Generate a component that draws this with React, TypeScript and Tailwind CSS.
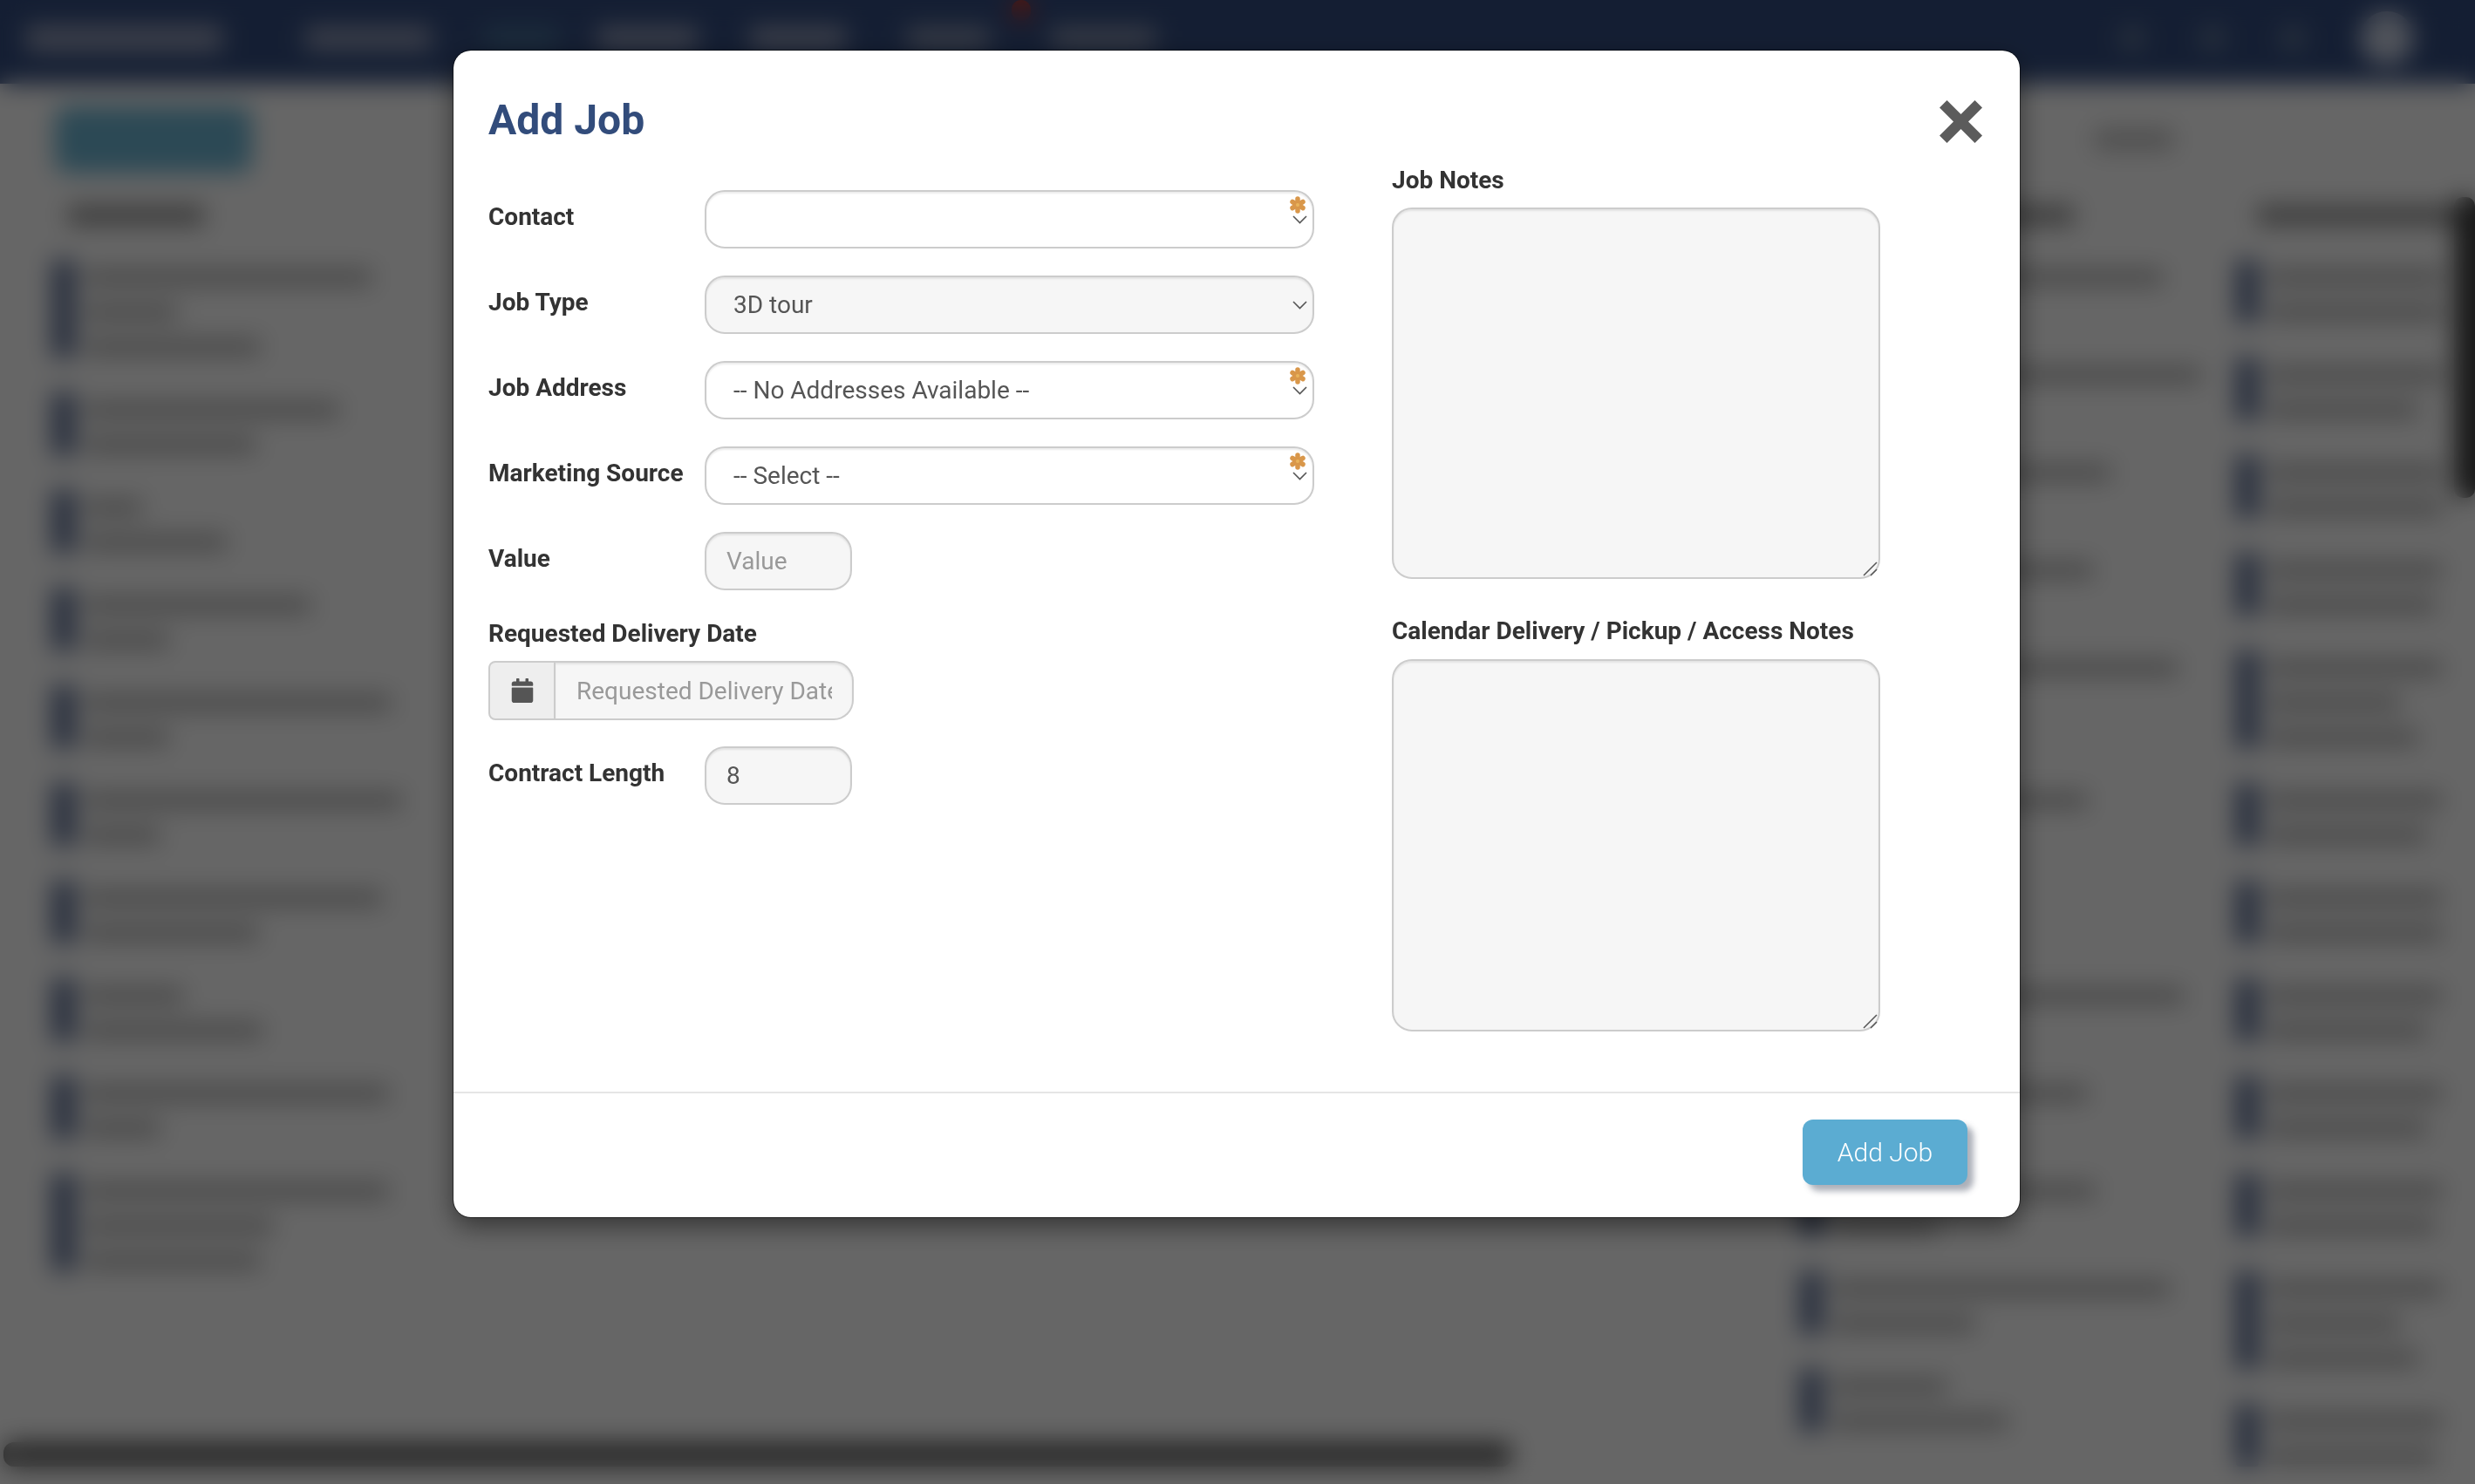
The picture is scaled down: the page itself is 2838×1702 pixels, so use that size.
import React from 'react';
import { FaCalendar } from 'react-icons/fa';

// widths of the text lines behind the modal, one array per card
const leftCards = [
    [328, 105, 200],
    [290, 195],
    [65, 162],
    [258, 95],
    [350, 95],
    [362, 85],
    [340, 198],
    [112, 203],
    [347, 85],
    [347, 215, 200],
];

const middleCards = [
    [378, 120],
    [422, 130],
    [318, 100],
    [298, 120],
    [395, 180, 160],
    [291, 120],
    [150, 100],
    [402, 120],
    [291, 120],
    [300, 120],
    [386, 162],
    [130, 200],
];

const rightCards = [
    [198, 198],
    [198, 170],
    [198, 198],
    [198, 190],
    [198, 150, 170],
    [198, 180],
    [198, 198],
    [198, 180],
    [198, 180],
    [198, 190],
    [198, 150, 170],
    [198, 190],
];

function Card({ lines }: { lines: number[] }) {
    return (
        <div className="flex gap-[12px] mb-[40px]">
            <div className="w-[26px] rounded-[4px] bg-[#5f7096]" />
            <div className="flex flex-col gap-[22px] pt-[11px] pb-[3px]">
                {lines.map((w, i) => (
                    <div key={i} className="h-[18px] bg-[#b2b2b2]" style={{ width: w }} />
                ))}
            </div>
        </div>
    );
}

function Column({ title, titleClass, cards, className }: { title: number; titleClass: string; cards: number[][]; className: string }) {
    return (
        <div className={className}>
            <div className={`h-[22px] mt-[38px] mb-[40px] bg-[#939393] ${titleClass}`} style={{ width: title }} />
            {cards.map((lines, i) => (
                <Card key={i} lines={lines} />
            ))}
        </div>
    );
}

function BackgroundPage() {
    return (
        <div className="h-screen flex flex-col bg-white overflow-hidden">
            <div className="h-[96px] shrink-0 bg-[#344d80] flex items-center pb-[8px] pl-[30px] relative">
                <div className="w-[225px] h-[30px] bg-[#98a0ba]" />
                <div className="w-[145px] h-[26px] ml-[95px] bg-[#98a0ba]" />
                <div className="w-[85px] h-[26px] ml-[60px] bg-[#466f95]" />
                <div className="w-[115px] h-[26px] ml-[45px] bg-[#98a0ba]" />
                <div className="w-[110px] h-[26px] ml-[60px] bg-[#98a0ba]" />
                <div className="w-[95px] h-[26px] ml-[70px] bg-[#8a94ae]" />
                <div className="w-[120px] h-[26px] ml-[70px] bg-[#8a94ae]" />
                <div className="absolute left-[1160px] top-0 w-[22px] h-[24px] rounded-full bg-[#c0392b]" />
                <div className="ml-auto flex items-center gap-[62px] mr-[70px]">
                    <div className="w-[30px] h-[30px] rounded-full bg-[#667a99]" />
                    <div className="w-[30px] h-[30px] rounded-full bg-[#667a99]" />
                    <div className="w-[30px] h-[30px] rounded-full bg-[#667a99]" />
                    <div className="w-[62px] h-[62px] rounded-full bg-[#c8d0e2]" />
                </div>
            </div>
            <div className="flex-1 relative flex flex-col min-h-0">
                <div className="flex items-center justify-between pl-[63px] pt-[26px] pr-[346px]">
                    <div className="w-[226px] h-[76px] rounded-[14px] bg-[#6eb6d4]" />
                    <div className="w-[90px] h-[24px] bg-[#c4c4c4]" />
                </div>
                <div className="flex flex-1 min-h-0 pl-[60px]">
                    <Column title={156} titleClass="ml-[18px]" cards={leftCards} className="w-[480px]" />
                    <div className="flex-1" />
                    <Column title={300} titleClass="ml-[14px]" cards={middleCards} className="w-[500px]" />
                    <Column title={226} titleClass="ml-[24px]" cards={rightCards} className="w-[274px] shrink-0" />
                </div>
                <div className="absolute right-0 top-[130px] w-[24px] h-[345px] rounded-[10px] bg-[#414141]" />
                <div className="absolute left-[4px] bottom-[20px] w-[1730px] h-[28px] rounded-[12px] bg-[#5d5d5d]" />
            </div>
        </div>
    );
}

function Asterisk() {
    return (
        <svg className="absolute top-[7px] right-[9px]" width="20" height="20" viewBox="0 0 20 20">
            <g stroke="#d9974a" strokeWidth="5.500" strokeLinecap="round">
                <line x1="10" y1="3" x2="10" y2="17" />
                <line x1="4" y1="6.500" x2="16" y2="13.500" />
                <line x1="16" y1="6.500" x2="4" y2="13.500" />
            </g>
            <circle cx="10" cy="10" r="2" fill="#e9b45c" />
        </svg>
    );
}

function Chevron() {
    return (
        <svg className="absolute top-[29px] right-[8px]" width="17" height="10" viewBox="0 0 17 10" fill="none">
            <path d="M1 1l7.500 7.500L16 1" stroke="#555" strokeWidth="1.600" />
        </svg>
    );
}

function ResizeHandle() {
    return (
        <svg className="absolute right-[3px] bottom-[3px]" width="17" height="17" viewBox="0 0 17 17" fill="none">
            <path d="M16 1L1 16M16 9l-7 7" stroke="#555" strokeWidth="1.500" />
        </svg>
    );
}

const fieldBase =
    'h-[67px] rounded-[23px] border-2 border-[#ccc] text-[28px] text-[#555] shadow-[inset_0_2px_2px_rgba(0,0,0,0.075)] outline-none placeholder:text-[#999]';

function SelectRow({ label, value, required, filled }: { label: string; value: string; required?: boolean; filled?: boolean }) {
    return (
        <div className="flex items-center mb-[31px]">
            <label className="w-[248px] pb-[5px] text-[28px] font-bold text-[#333]">{label}</label>
            <div className="relative w-[699px]">
                <select
                    defaultValue={value}
                    className={`${fieldBase} block w-full appearance-none pl-[31px] pr-[40px] ${filled ? 'bg-[#f6f6f6]' : 'bg-white'}`}
                >
                    <option value={value}>{value}</option>
                </select>
                {required && <Asterisk />}
                <Chevron />
            </div>
        </div>
    );
}

function NotesField({ className }: { className: string }) {
    return (
        <div className="relative">
            <textarea className={`${fieldBase} block w-full resize-none rounded-[20px] bg-[#f6f6f6] ${className}`} />
            <ResizeHandle />
        </div>
    );
}

export default function App() {
    return (
        <div className="relative h-screen overflow-hidden font-['Roboto',sans-serif]">
            <BackgroundPage />
            <div className="fixed inset-0 bg-black/60 backdrop-blur-[14px] pl-[520px] pt-[58px]">
                <div className="relative w-[1796px] h-[1338px] flex flex-col rounded-[20px] bg-white shadow-[0_10px_30px_rgba(0,0,0,0.5)] outline outline-1 outline-black/50">
                    <button className="absolute left-[1704px] top-[57px]" aria-label="Close">
                        <svg className="block" width="49" height="49" viewBox="0 0 49 49">
                            <path d="M8.500 0L24.500 16L40.500 0L49 8.500L33 24.500L49 40.500L40.500 49L24.500 33L8.500 49L0 40.500L16 24.500L0 8.500Z" fill="#5c5c5c" />
                        </svg>
                    </button>

                    <div className="flex h-[1196px] shrink-0 border-b-2 border-[#e5e5e5] pl-[40px]">
                        <div className="w-[947px]">
                            <h1 className="h-[160px] pt-[47px] text-[48px] leading-[66px] font-bold text-[#324c7b]">Add Job</h1>
                            <SelectRow label="Contact" value="" required />
                            <SelectRow label="Job Type" value="3D tour" filled />
                            <SelectRow label="Job Address" value="-- No Addresses Available --" required />
                            <SelectRow label="Marketing Source" value="-- Select --" required />

                            <div className="flex items-center">
                                <label className="w-[248px] pb-[5px] text-[28px] font-bold text-[#333]">Value</label>
                                <input placeholder="Value" className={`${fieldBase} w-[169px] bg-[#f6f6f6] px-[23px]`} />
                            </div>

                            <div className="mt-[29px] mb-[10px] h-[42px] flex items-center text-[28px] font-bold text-[#333]">Requested Delivery Date</div>
                            <div className="flex w-[419px] h-[68px]">
                                <span className="w-[77px] flex items-center justify-center rounded-l-[8px] border-2 border-[#ccc] bg-[#eee] text-[#555]">
                                    <FaCalendar size={28} />
                                </span>
                                <input
                                    placeholder="Requested Delivery Date"
                                    className={`${fieldBase} h-[68px] min-w-0 flex-1 rounded-l-none border-l-0 bg-[#f6f6f6] pl-[24px] pr-[23px]`}
                                />
                            </div>

                            <div className="flex items-center mt-[30px]">
                                <label className="w-[248px] pb-[5px] text-[28px] font-bold text-[#333]">Contract Length</label>
                                <input defaultValue="8" className={`${fieldBase} w-[169px] bg-[#f6f6f6] px-[23px]`} />
                            </div>
                        </div>

                        <div className="ml-[89px] w-[560px] pt-[129px]">
                            <div className="h-[40px] mb-[11px] flex items-center text-[28px] font-bold text-[#333]">Job Notes</div>
                            <NotesField className="h-[426px]" />
                            <div className="h-[40px] mt-[40px] mb-[12px] flex items-center text-[28px] font-bold text-[#333]">Calendar Delivery / Pickup / Access Notes</div>
                            <NotesField className="h-[427px]" />
                        </div>
                    </div>

                    <div className="flex justify-end pt-[30px] pr-[60px]">
                        <button className="w-[189px] h-[75px] rounded-[12px] bg-[#5bacd2] text-[30px] font-light text-white shadow-[7px_7px_7px_rgba(70,80,100,0.45)]">
                            Add Job
                        </button>
                    </div>
                </div>
            </div>
        </div>
    );
}
